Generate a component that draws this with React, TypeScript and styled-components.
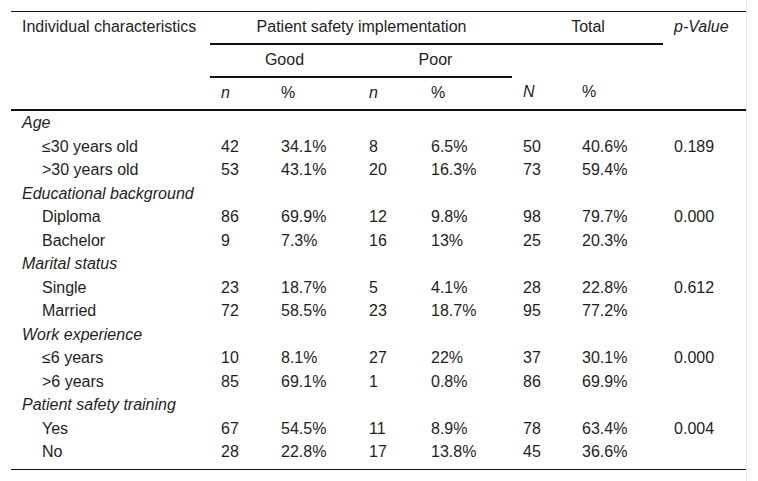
import React from "react";
import styled, { createGlobalStyle } from "styled-components";

const Global = createGlobalStyle`
  html, body { margin: 0; padding: 0; background: #fff; }
  body { font-family: "Liberation Sans", Arial, sans-serif; color: #1e1e1e; }
`;

const Frame = styled.div`
  width: 747px;
  min-height: 100vh;
  box-sizing: border-box;
  border-right: 1px solid #e4e4e4;
  padding: 11px 0 0 11px;
`;

const Table = styled.table`
  width: 735px;
  border-collapse: collapse;
  table-layout: fixed;
  font-family: "Liberation Sans", Arial, sans-serif;
  font-size: 16px;
  color: #1e1e1e;
  border-top: 1px solid #111;
  border-bottom: 1px solid #111;
`;

const Th = styled.th<{ $center?: boolean; $italic?: boolean; $rule?: boolean; $thick?: boolean }>`
  font-weight: normal;
  font-style: ${(p) => (p.$italic ? "italic" : "normal")};
  text-align: ${(p) => (p.$center ? "center" : "left")};
  vertical-align: top;
  line-height: 18px;
  padding: 6px 10px 7px 11px;
  border-bottom: ${(p) => (p.$rule || p.$thick ? "2px solid #111" : "none")};
  white-space: nowrap;
`;

const Row = styled.tr<{ $last?: boolean }>`
  & > td {
    padding-bottom: ${(p) => (p.$last ? "8.5px" : "3px")};
  }
`;

const Td = styled.td<{ $indent?: boolean; $italic?: boolean }>`
  line-height: 17.5px;
  padding-top: 3px;
  padding-right: 10px;
  padding-left: ${(p) => (p.$indent ? "31px" : "11px")};
  font-style: ${(p) => (p.$italic ? "italic" : "normal")};
  white-space: nowrap;
`;

const widths = [199, 60, 88, 62, 92, 59, 92, 83];

type Item = { label: string; v: string[]; p?: string };
type Group = { title: string; items: Item[] };

const data: Group[] = [
  {
    title: "Age",
    items: [
      { label: "≤30 years old", v: ["42", "34.1%", "8", "6.5%", "50", "40.6%"], p: "0.189" },
      { label: ">30 years old", v: ["53", "43.1%", "20", "16.3%", "73", "59.4%"] },
    ],
  },
  {
    title: "Educational background",
    items: [
      { label: "Diploma", v: ["86", "69.9%", "12", "9.8%", "98", "79.7%"], p: "0.000" },
      { label: "Bachelor", v: ["9", "7.3%", "16", "13%", "25", "20.3%"] },
    ],
  },
  {
    title: "Marital status",
    items: [
      { label: "Single", v: ["23", "18.7%", "5", "4.1%", "28", "22.8%"], p: "0.612" },
      { label: "Married", v: ["72", "58.5%", "23", "18.7%", "95", "77.2%"] },
    ],
  },
  {
    title: "Work experience",
    items: [
      { label: "≤6 years", v: ["10", "8.1%", "27", "22%", "37", "30.1%"], p: "0.000" },
      { label: ">6 years", v: ["85", "69.1%", "1", "0.8%", "86", "69.9%"] },
    ],
  },
  {
    title: "Patient safety training",
    items: [
      { label: "Yes", v: ["67", "54.5%", "11", "8.9%", "78", "63.4%"], p: "0.004" },
      { label: "No", v: ["28", "22.8%", "17", "13.8%", "45", "36.6%"] },
    ],
  },
];

export default function App() {
  return (
    <>
      <Global />
      <Frame>
        <Table>
          <colgroup>
            {widths.map((w, i) => (
              <col key={i} style={{ width: w }} />
            ))}
          </colgroup>
          <thead>
            <tr>
              <Th rowSpan={3} $thick>Individual characteristics</Th>
              <Th colSpan={4} $center $rule>Patient safety implementation</Th>
              <Th colSpan={2} $center $rule>Total</Th>
              <Th rowSpan={3} $italic $thick>p-Value</Th>
            </tr>
            <tr>
              <Th colSpan={2} $center $rule>Good</Th>
              <Th colSpan={2} $center $rule>Poor</Th>
              <Th colSpan={2}></Th>
            </tr>
            <tr>
              <Th $italic $thick>n</Th>
              <Th $thick>%</Th>
              <Th $italic $thick>n</Th>
              <Th $thick>%</Th>
              <Th $italic $thick>N</Th>
              <Th $thick>%</Th>
            </tr>
          </thead>
          <tbody>
            {data.map((g, gi) => (
              <React.Fragment key={g.title}>
                <Row>
                  <Td $italic colSpan={8}>{g.title}</Td>
                </Row>
                {g.items.map((it, ii) => (
                  <Row key={it.label} $last={gi === data.length - 1 && ii === g.items.length - 1}>
                    <Td $indent>{it.label}</Td>
                    {it.v.map((x, i) => (
                      <Td key={i}>{x}</Td>
                    ))}
                    <Td>{it.p ?? ""}</Td>
                  </Row>
                ))}
              </React.Fragment>
            ))}
          </tbody>
        </Table>
      </Frame>
    </>
  );
}
